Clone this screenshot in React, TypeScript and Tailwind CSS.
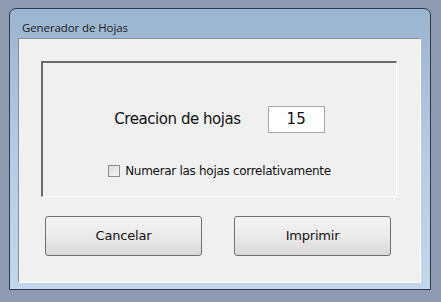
export default function App() {
  return (
    <div className="h-[302px] w-[441px] overflow-hidden bg-[#8f9bb0] pl-[9px] pt-[8px]">
      <div className="flex h-[282px] w-[422px] flex-col rounded-t-[7px] border border-[#2e3a4a] bg-gradient-to-b from-[#9bb4cf] via-[#b4cbe3] to-[#c3d7ec]">
        {/* title bar */}
        <div className="flex h-[29px] items-end pb-[5px] pl-[12px]">
          <span className="font-['Open_Sans',sans-serif] text-[11.5px] leading-none tracking-[-0.1px] text-[#1b1b1b]">
            Generador de Hojas
          </span>
        </div>

        {/* client area */}
        <div className="ml-[8px] mr-[9px] flex h-[245px] flex-col border-t border-l border-[#8a9099] border-r border-r-white border-b border-b-white bg-[#f0f0f0] font-['DejaVu_Sans',sans-serif] text-[#111]">
          <div className="ml-[22px] mt-[22px] flex h-[136px] w-[356px] flex-col items-center border-l-2 border-t-2 border-l-[#6b6b6b] border-t-[#6b6b6b] border-r border-b border-r-white border-b-white">
            <div className="mt-[43px] flex items-center gap-[27px]">
              <span className="text-[15px] tracking-[-0.45px]">Creacion de hojas</span>
              <div className="flex h-[27px] w-[57px] items-center justify-center border border-[#a8a8a8] bg-white text-[15px]">
                15
              </div>
            </div>
            <div className="mt-[29px] flex items-center gap-[5px]">
              <span className="h-[12px] w-[12px] border border-[#8e8f8f] bg-gradient-to-br from-[#dcdcdc] to-[#f6f6f6]" />
              <span className="text-[12px] tracking-[-0.3px]">Numerar las hojas correlativamente</span>
            </div>
          </div>

          <div className="ml-[26px] mt-[19px] flex gap-[32px]">
            <button
              type="button"
              className="h-[40px] w-[157px] rounded-[3px] border border-[#707070] bg-gradient-to-b from-[#f3f3f3] via-[#ebebeb] to-[#d8d8d8] text-[13px] tracking-[-0.2px] text-[#111]"
            >
              Cancelar
            </button>
            <button
              type="button"
              className="h-[40px] w-[157px] rounded-[3px] border border-[#707070] bg-gradient-to-b from-[#f3f3f3] via-[#ebebeb] to-[#d8d8d8] text-[13px] tracking-[-0.2px] text-[#111]"
            >
              Imprimir
            </button>
          </div>
        </div>
      </div>
    </div>
  );
}
